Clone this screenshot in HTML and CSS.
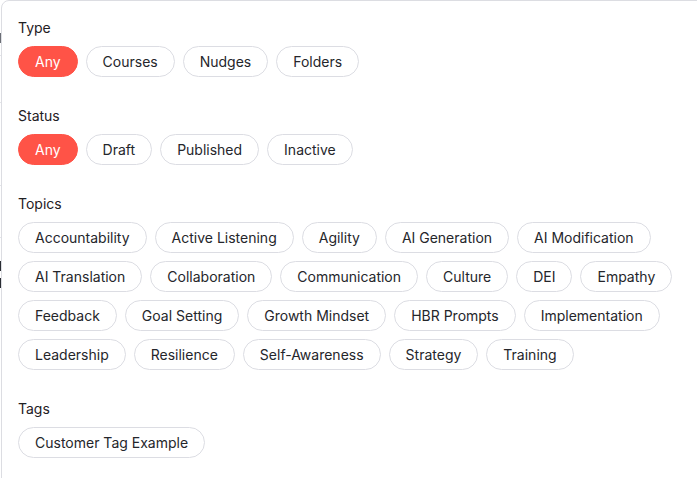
FILE: index.html
```html
<!DOCTYPE html>
<html lang="en">
<head>
<meta charset="utf-8">
<title>Filters</title>
<link rel="stylesheet" href="styles.css">
</head>
<body>
<div class="page">
  <div class="under">
    <div class="under-row r1"><span class="under-text"></span></div>
    <div class="under-row r2"></div>
    <div class="under-row r3"></div>
    <div class="under-row r4"></div>
    <div class="under-row r5"><span class="under-text"></span><span class="under-text"></span></div>
  </div>
  <div class="popover">
    <section class="group">
      <h3 class="label">Type</h3>
      <div class="chips">
        <span class="chip active">Any</span>
        <span class="chip">Courses</span>
        <span class="chip">Nudges</span>
        <span class="chip">Folders</span>
      </div>
    </section>
    <section class="group">
      <h3 class="label">Status</h3>
      <div class="chips">
        <span class="chip active">Any</span>
        <span class="chip">Draft</span>
        <span class="chip">Published</span>
        <span class="chip">Inactive</span>
      </div>
    </section>
    <section class="group">
      <h3 class="label">Topics</h3>
      <div class="chips">
        <span class="chip">Accountability</span>
        <span class="chip">Active Listening</span>
        <span class="chip">Agility</span>
        <span class="chip">AI Generation</span>
        <span class="chip">AI Modification</span>
        <span class="chip">AI Translation</span>
        <span class="chip">Collaboration</span>
        <span class="chip">Communication</span>
        <span class="chip">Culture</span>
        <span class="chip">DEI</span>
        <span class="chip">Empathy</span>
        <span class="chip">Feedback</span>
        <span class="chip">Goal Setting</span>
        <span class="chip">Growth Mindset</span>
        <span class="chip">HBR Prompts</span>
        <span class="chip">Implementation</span>
        <span class="chip">Leadership</span>
        <span class="chip">Resilience</span>
        <span class="chip">Self-Awareness</span>
        <span class="chip">Strategy</span>
        <span class="chip">Training</span>
      </div>
    </section>
    <section class="group">
      <h3 class="label">Tags</h3>
      <div class="chips">
        <span class="chip">Customer Tag Example</span>
      </div>
    </section>
  </div>
</div>
</body>
</html>
```

FILE: styles.css
```css
html, body {
  margin: 0;
  padding: 0;
  background: #ffffff;
}

body {
  font-family: Inter, "Noto Sans", "Liberation Sans", sans-serif;
  color: #1f2024;
  width: 697px;
  height: 478px;
  overflow: hidden;
}

.page {
  position: relative;
  width: 697px;
  height: 478px;
}

/* page content lying behind the popover */
.under {
  display: flex;
  flex-direction: column;
}

.under-row {
  border-bottom: 1px solid #e4e5e9;
  display: flex;
  flex-direction: column;
  gap: 7px;
}

.r1 { height: 56px; padding-top: 33px; box-sizing: border-box; }
.r2 { height: 46px; }
.r3 { height: 82px; }
.r4 { height: 51px; }
.r5 { height: 60px; padding-top: 23px; box-sizing: border-box; border-bottom: none; }

.under-text {
  display: block;
  width: 6px;
  height: 10px;
  background: #2a2d33;
}

.r1 .under-text {
  background: #6b6e75;
}

.popover {
  position: absolute;
  top: 0;
  left: 1px;
  right: -12px;
  bottom: -12px;
  background: #ffffff;
  border: 1px solid #dcdde2;
  border-radius: 8px;
  padding: 17px 16px;
  display: flex;
  flex-direction: column;
  gap: 29px;
}

.group {
  display: flex;
  flex-direction: column;
  gap: 8px;
}

.label {
  margin: 0;
  font-size: 14px;
  line-height: 20px;
  font-weight: 400;
  color: #1f2024;
}

.chips {
  display: flex;
  flex-wrap: wrap;
  gap: 8px;
  max-width: 664px;
}

.chip {
  display: inline-flex;
  align-items: center;
  box-sizing: border-box;
  height: 31px;
  padding: 0 16px;
  border: 1px solid #dcdde3;
  border-radius: 999px;
  font-size: 14px;
  line-height: 20px;
  color: #25262b;
  background: #ffffff;
  white-space: nowrap;
}

.chip.active {
  background: #ff5347;
  border-color: #ff5347;
  color: #ffffff;
}
```
